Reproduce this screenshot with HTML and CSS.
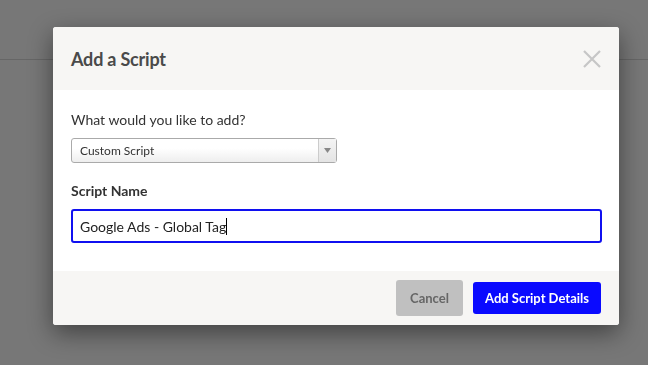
FILE: index.html
```html
<!DOCTYPE html>
<html lang="en">
<head>
    <meta charset="UTF-8">
    <meta name="viewport" content="width=device-width, initial-scale=1.0">
    <title>Add a Script</title>
    <link rel="stylesheet" href="styles.css">
</head>
<body>
    <div class="page">
        <div class="page-bar"></div>
    </div>

    <div class="overlay">
        <div class="modal">
            <div class="modal-header">
                <h2>Add a Script</h2>
                <button class="close" aria-label="Close">
                    <svg width="20" height="20" viewBox="0 0 20 20">
                        <path d="M2 2 L18 18 M18 2 L2 18" stroke="#c6c6c6" stroke-width="2.2" fill="none"/>
                    </svg>
                </button>
            </div>
            <div class="modal-body">
                <label class="question">What would you like to add?</label>
                <div class="select">
                    <span class="select-value">Custom Script</span>
                    <span class="select-arrow">
                        <svg width="7" height="5" viewBox="0 0 7 5"><path d="M0 0 L7 0 L3.5 5 Z" fill="#888"/></svg>
                    </span>
                </div>
                <label class="field-label">Script Name</label>
                <div class="text-input">Google Ads - Global Tag<span class="caret"></span></div>
            </div>
            <div class="modal-footer">
                <button class="btn btn-cancel">Cancel</button>
                <button class="btn btn-primary">Add Script Details</button>
            </div>
        </div>
    </div>
</body>
</html>
```

FILE: styles.css
```css
* {
    box-sizing: border-box;
    margin: 0;
    padding: 0;
}
body {
    font-family: 'Lato', 'Noto Sans', sans-serif;
    background-color: #777;
    width: 648px;
    height: 365px;
    overflow: hidden;
}
.page-bar {
    height: 60px;
    border-bottom: 1px solid #666;
}
.overlay {
    position: fixed;
    left: 0;
    top: 0;
    width: 100%;
    height: 100%;
}
.modal {
    margin: 27px 0 0 53px;
    width: 566px;
    background-color: #fff;
    border-radius: 3px;
    overflow: hidden;
    box-shadow: 0 8px 24px rgba(0, 0, 0, 0.45);
}
.modal-header {
    height: 63px;
    background-color: #f7f6f4;
    display: flex;
    align-items: center;
    justify-content: space-between;
    padding: 0 17px 0 18px;
}
.modal-header h2 {
    font-size: 18px;
    font-weight: bold;
    color: #4a4a4a;
    letter-spacing: -0.2px;
}
.close {
    background: none;
    border: none;
    display: flex;
    cursor: pointer;
}
.modal-body {
    padding: 21px 17px 28px 18px;
}
.question {
    display: block;
    font-size: 14px;
    color: #333;
    margin-bottom: 10px;
}
.select {
    width: 266px;
    height: 25px;
    border: 1px solid #aaa;
    border-radius: 3px;
    background: linear-gradient(#fff 40%, #eee);
    display: flex;
    align-items: center;
    justify-content: space-between;
    margin-bottom: 19px;
}
.select-value {
    font-size: 12px;
    color: #333;
    padding-left: 8px;
}
.select-arrow {
    width: 18px;
    height: 100%;
    border-left: 1px solid #ccc;
    display: flex;
    align-items: center;
    justify-content: center;
    background: linear-gradient(#f4f4f4, #e4e4e4);
}
.field-label {
    display: block;
    font-size: 14px;
    font-weight: bold;
    color: #333;
    margin-bottom: 10px;
}
.text-input {
    height: 34px;
    border: 2px solid #1010f0;
    border-radius: 3px;
    font-size: 14px;
    color: #222;
    padding: 0 7px;
    display: flex;
    align-items: center;
}
.caret {
    display: inline-block;
    width: 1px;
    height: 17px;
    background-color: #000;
}
.modal-footer {
    height: 54px;
    background-color: #f7f6f4;
    display: flex;
    align-items: center;
    justify-content: flex-end;
    gap: 10px;
    padding-right: 18px;
}
.btn {
    border: none;
    border-radius: 3px;
    font-family: inherit;
    font-size: 13px;
    font-weight: bold;
    cursor: pointer;
}
.btn-cancel {
    background-color: #c0c0c0;
    color: #666;
    width: 67px;
    height: 36px;
}
.btn-primary {
    background-color: #0a0aff;
    color: #fff;
    width: 128px;
    height: 32px;
}
```
